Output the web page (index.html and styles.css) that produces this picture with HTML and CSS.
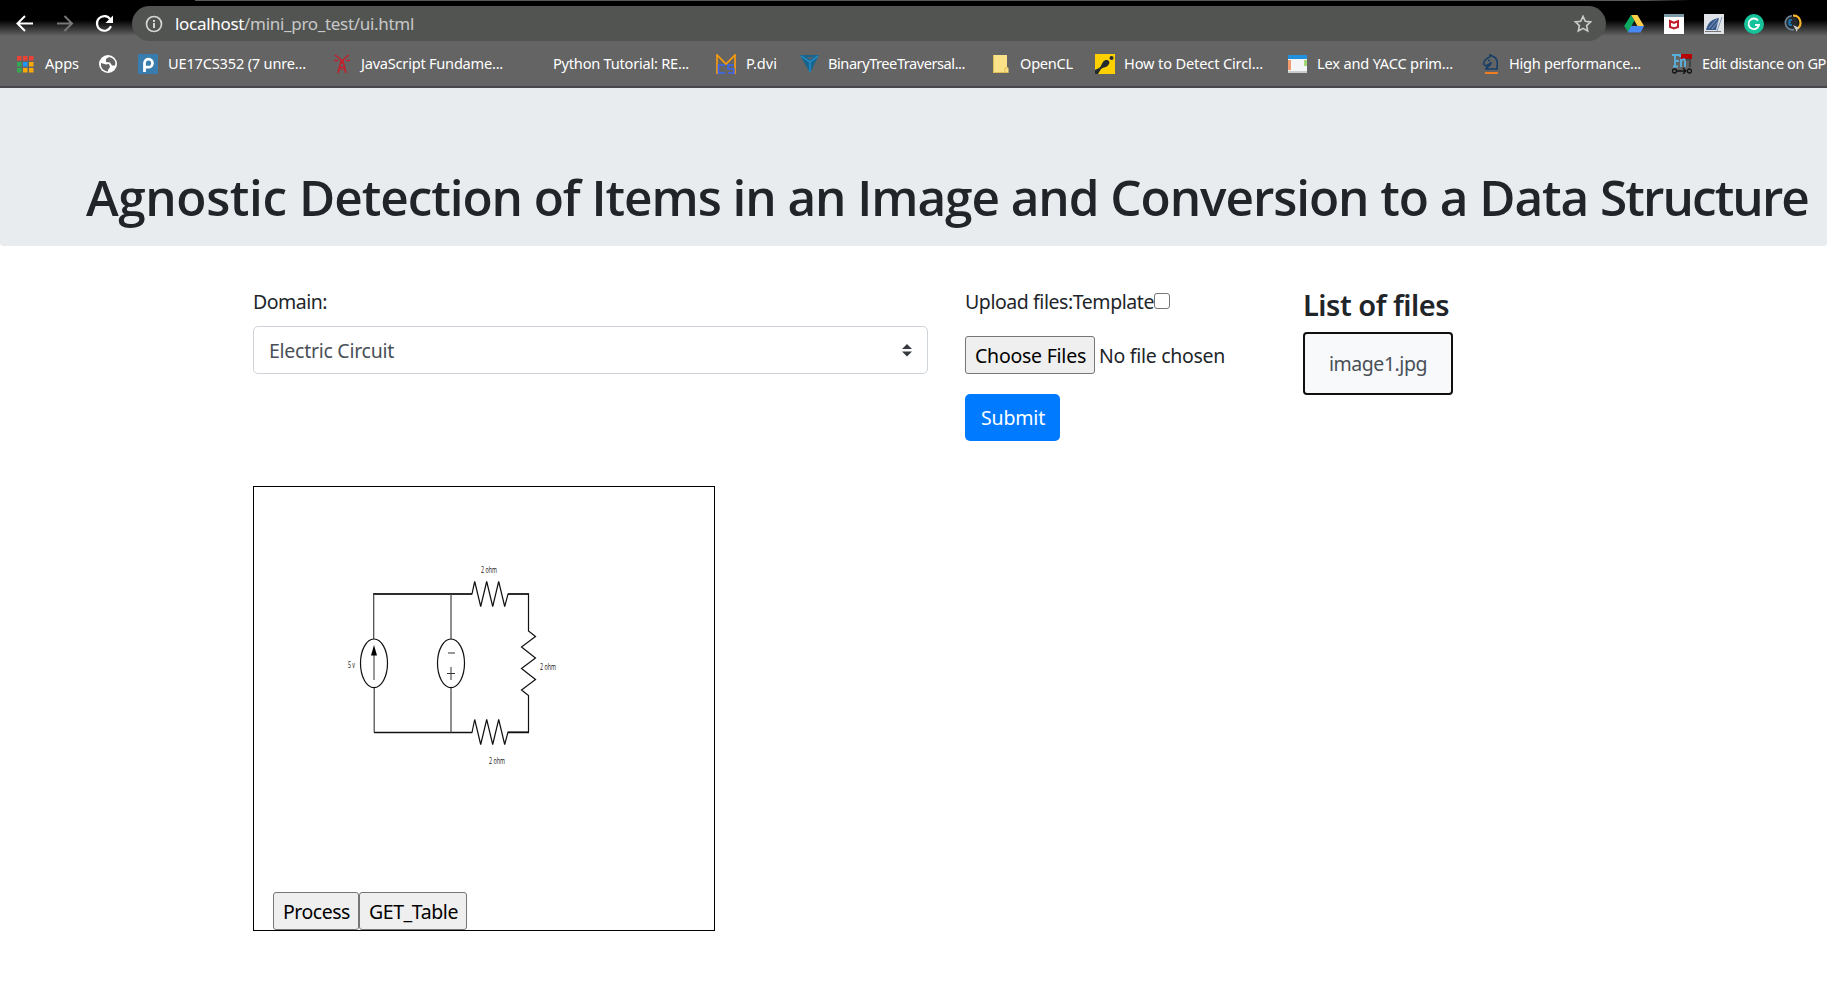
FILE: index.html
```html
<!DOCTYPE html>
<html lang="en">
<head>
<meta charset="utf-8">
<title>ui.html</title>
<link rel="stylesheet" href="styles.css">
</head>
<body>
<header class="browser">
  <div class="toolbar">
    <svg class="nav" width="126" height="35" viewBox="0 0 126 35" fill="none">
      <path d="M33 17.500H18M25 10l-7.500 7.500L25 25" stroke="#fff" stroke-width="2"/>
      <path d="M57 17.500h15M64.500 10l7.500 7.500L64.500 25" stroke="#777" stroke-width="2"/>
      <path d="M110.300 13.300A7.300 7.300 0 1 0 111 20.300" stroke="#fff" stroke-width="2.200"/>
      <path d="M113 9.500v7.500h-7.500z" fill="#fff"/>
    </svg>
    <div class="omnibox">
      <svg width="18" height="18" viewBox="0 0 18 18"><circle cx="9" cy="9" r="7.500" fill="none" stroke="#d5d5d5" stroke-width="1.700"/><path d="M8 8h2v5H8zM8 5h2v2H8z" fill="#d5d5d5"/></svg>
      <div class="url"><span class="host">localhost</span>/mini_pro_test/ui.html</div>
      <svg class="star" width="20" height="20" viewBox="0 0 20 20"><path d="M10 2.300l2.300 5 5.300.6-4 3.700 1.100 5.400L10 14.300 5.300 17l1.100-5.400-4-3.700 5.300-.6z" fill="none" stroke="#ccc" stroke-width="1.600"/></svg>
    </div>
    <div class="extensions">
      <svg width="20" height="20" viewBox="0 0 20 20"><path d="M7 1h6.500L20 12h-6.500z" fill="#ffcf48"/><path d="M7 1l3.300 5.700L4 18 .2 12z" fill="#0da960"/><path d="M7 12h13l-3.500 6.500H3.700z" fill="#4688f4"/></svg>
      <svg width="20" height="20" viewBox="0 0 20 20"><path fill="#fff" d="M0 0h20v20H0z"/><path fill="#7b98a5" d="M0 0h20v3H0z"/><path d="M6 7l4 2 4-2v6l-4 1.500L6 13z" fill="none" stroke="#c11d2b" stroke-width="2"/></svg>
      <svg width="20" height="20" viewBox="0 0 20 20"><path fill="#dfe2e6" d="M0 0h20v20H0z"/><path d="M2 16C4 8 8 5 15 4l-3 12z" fill="#35598c"/><path d="M18 3l-5 14M5 14l8-9M8 15l6-7" stroke="#8499b6"/><path d="M1 17.500h16" stroke="#777"/></svg>
      <svg width="20" height="20" viewBox="0 0 20 20"><circle cx="10" cy="10" r="10" fill="#15c39a"/><path d="M14 6.500A5.300 5.300 0 1 0 15 11h-4" fill="none" stroke="#fff" stroke-width="1.800"/></svg>
      <svg width="20" height="20" viewBox="0 0 20 20"><circle cx="8" cy="8.500" r="6" fill="#25292e"/><path d="M8 1.800A7 7 0 1 0 10 15.600" fill="none" stroke="#70879e" stroke-width="1.600"/><path d="M9 1.700a7 7 0 0 1 4 13" fill="none" stroke="#f5b52e" stroke-width="2.200"/><path d="M5 6v5M5 6h3M5 8.500h2M5 11h3" stroke="#1683c5" stroke-width="1.300"/><path d="M9 11l4 7 .5-3 2-1z" fill="#ccc"/></svg>
    </div>
  </div>
  <nav class="bookmarks">
    <svg class="apps" width="17" height="17" viewBox="0 0 17 17"><path fill="#ea4335" d="M0 0h4.500v4.500H0zM6 0h4.500v4.500H6zM12 0h4.500v4.500H12z"/><path fill="#34a853" d="M0 6h4.500v4.500H0zM0 12h4.500v4.500H0z"/><path fill="#2196f3" d="M6 6h4.500v4.500H6z"/><path fill="#fbaa05" d="M12 6h4.500v4.500H12zM6 12h4.500v4.500H6zM12 12h4.500v4.500H12z"/></svg>
    <span class="bm b-apps">Apps</span>
    <svg class="globe" width="18" height="18" viewBox="0 0 18 18"><circle cx="9" cy="9" r="9" fill="#fff"/><path d="M2 8l5 1.500 3-.5 1 3-2 3v1.500c-5-.5-7.500-4-7-8.500zM10 2L7 4v3l4 .5 2 3h3c1-3 0-6-3-7.500z" fill="#646464"/></svg>
    <svg class="i-p" width="20" height="20" viewBox="0 0 20 20"><path fill="#397dae" d="M0 0h20v20H0z"/><path d="M6.500 18V9a4 4 0 1 1 4 4.200H7" fill="none" stroke="#fff" stroke-width="2.800"/></svg>
    <span class="bm b-ue">UE17CS352 (7 unre...</span>
    <svg class="i-tower" width="16" height="20" viewBox="0 0 16 20" fill="none" stroke="#c3202c" stroke-width="1.500"><path d="M4 19l3-12h2l3 12M5.500 12l5 4M10.500 12l-5 4M6.500 9h3M5 4l3 3 3-3M1 1l4 3M15 1l-4 3M0 6.500h4M12 6.500h4"/></svg>
    <span class="bm b-js">JavaScript Fundame...</span>
    <span class="bm b-py">Python Tutorial: RE...</span>
    <svg class="i-m" width="20" height="20" viewBox="0 0 20 20" fill="none"><path d="M1 20V1l9 9 9-9v19" stroke="#ff9d0a" stroke-width="1.600"/><path d="M9 11H2.500v8H9M18 11h-6v4h6v4h-6" stroke="#3b66f5" stroke-width="1.500"/></svg>
    <span class="bm b-p">P.dvi</span>
    <svg class="i-tri" width="20" height="18" viewBox="0 0 20 18"><path d="M0 0h19l-9 18z" fill="#17648f"/><path d="M1 1l9 6 8-6M10 7v10" fill="none" stroke="#2393cd" stroke-width="1.300"/><path d="M6 2h8l-4 3z" fill="#54606a"/></svg>
    <span class="bm b-bin">BinaryTreeTraversal...</span>
    <svg class="i-folder" width="16" height="18" viewBox="0 0 16 18"><path d="M0 0h14v12l1.500 1v5H0z" fill="#fbe187"/><path d="M.5 0v17.500H15M12 17v-4h3" fill="none" stroke="#dfbd56"/></svg>
    <span class="bm b-open">OpenCL</span>
    <svg class="i-y" width="20" height="20" viewBox="0 0 20 20"><path fill="#ffd000" d="M0 0h20v20H0z"/><circle cx="16.500" cy="4" r="2" fill="#222b2f"/><path d="M0 20v-4l4-2c2-1 2-3 4-6 3-4 8-1 6 2-2 4-6 3-8 5l-3 5z" fill="#222b2f"/></svg>
    <span class="bm b-how">How to Detect Circl...</span>
    <svg class="i-lex" width="19" height="18" viewBox="0 0 19 18"><path fill="#f4f5f6" d="M0 0h19v18H0z"/><path fill="#1f91de" d="M0 0h19v4H0z"/><path fill="#f29a70" d="M0 5h3v10H0z"/><path fill="#a4d77a" d="M16 5h3v6h-3z"/><path fill="#ccc" d="M0 16h19v2H0z"/></svg>
    <span class="bm b-lex">Lex and YACC prim...</span>
    <svg class="i-horse" width="17" height="20" viewBox="0 0 17 20" fill="none"><path d="M3 15h12c0-5 2-11-5-13L8 .8v2C5 4 2 7 1.500 10l2.500 2 5-3c0 3-4 3-5 6M6 6.500h2" stroke="#173e68" stroke-width="1.600"/><path d="M3 19h13" stroke="#ef7e20" stroke-width="2"/></svg>
    <span class="bm b-high">High performance...</span>
    <svg class="i-fm" width="20" height="20" viewBox="0 0 20 20" fill="none"><path d="M9 0h11v5H9z" fill="#b90000"/><path d="M0 1h8v2M3 1v12M1 12.500h5M3 7h4M9 5v8M9 7c3-3 4-2 4 0v6" stroke="#5aaeda" stroke-width="1.900"/><path d="M14 6c4-2 4 0 4 2v5" stroke="#444" stroke-width="2"/><circle cx="2.500" cy="17" r="2" stroke="#111" stroke-width="1.300"/><circle cx="17.500" cy="17" r="2" stroke="#111" stroke-width="1.300"/><path d="M5 17h9M11 14l3 3-3 3" stroke="#111" stroke-width="1.300"/></svg>
    <span class="bm b-edit">Edit distance on GP</span>
  </nav>
</header>
<section class="jumbotron"><h1><span class="h-first">Agnostic </span><span class="h-mid">Detection of Items in an Image and Conversion to a Data </span><span class="h-last">Structure</span></h1></section>
<main class="content">
  <div class="row">
    <div class="domain">
      <div class="label t-domain">Domain:</div>
      <div class="select"><span class="t-select">Electric Circuit</span><svg width="10" height="13" viewBox="0 0 10 13"><path d="M5 0l5 5H0zM0 7.500h10l-5 5z" fill="#343a40"/></svg></div>
    </div>
    <div class="upload">
      <div class="label"><span class="t-upload">Upload files:Template</span><span class="check"></span></div>
      <div class="file"><span class="btn choose"><span class="t-choose">Choose Files</span></span><span class="t-none">No file chosen</span></div>
      <div class="submit"><span class="t-submit">Submit</span></div>
    </div>
    <div class="files">
      <h3><span class="t-list">List of files</span></h3>
      <div class="item"><span class="t-item">image1.jpg</span></div>
    </div>
  </div>
  <div class="canvas">
    <svg class="circuit" width="240" height="230" viewBox="0 0 240 230" fill="none" stroke="#111" stroke-width="1.200">
      <path d="M43.500 44H142l2.700-12.500 6 25 6-25 6 25 6-25 6 25 3.300-12.500h20.500v37l7 5.500-14 10.500 14 11-14 10.500 14 11-14 10.500 7 5.500v36.500h-20.500l-3.300 12.500-6-25-6 25-6-25-6 25-6-25L142 182.500H44"/>
      <path d="M43 44H142M178 44h21M44 182.500h98M178 182.500h21" stroke-width="1.600"/>
      <path d="M43.700 44v45M44.200 137.500v45M121 44v45M121 137.500v45" stroke="#444"/>
      <ellipse cx="44" cy="113.300" rx="13.500" ry="24.300"/><ellipse cx="121" cy="113.300" rx="13.500" ry="24.300"/>
      <path d="M44 130v-27M118 103h7M117 123.500h8M121 117v13" stroke="#333" stroke-width="1"/><path d="M44 95l3 10.500h-6z" fill="#000" stroke="none"/>
      <g class="ohm"><text x="151" y="22.500" textLength="16" lengthAdjust="spacingAndGlyphs">2 ohm</text><text x="210" y="119.500" textLength="16" lengthAdjust="spacingAndGlyphs">2 ohm</text><text x="159" y="213.500" textLength="16" lengthAdjust="spacingAndGlyphs">2 ohm</text><text x="18" y="118" textLength="7" lengthAdjust="spacingAndGlyphs">5 v</text></g>
    </svg>
    <div class="actions"><span class="btn process"><span class="t-process">Process</span></span><span class="btn get"><span class="t-get">GET_Table</span></span></div>
  </div>
</main>
<script src="fit.js"></script>
</body>
</html>
```
FILE: styles.css
```css
*{box-sizing:border-box}
html,body{margin:0;height:983px;overflow:hidden;background:#fff}
body{font:400 19.500px/30px "Noto Sans","Open Sans",sans-serif;color:#212529}
svg{display:block;flex:none}
.browser{height:88px;overflow:hidden;background:linear-gradient(#000 0,#000 20px,#646464 36px);border-bottom:2px solid #46474a}
.toolbar{height:42px;padding-top:6px;display:flex;background:linear-gradient(90deg,transparent 195px,#5a5a5a 195px,#5a5a5a 1644px,transparent 1690px) top/100% 1px no-repeat}
.nav{margin-right:6px}
.omnibox{width:1474px;height:35px;border-radius:18px;background:#525452;display:flex;align-items:center;padding:0 13px}
.url{font-size:17px;line-height:34px;color:#c8c8c8;margin-left:12px;white-space:nowrap}
.host{color:#fff}
.star{margin-left:auto}
.extensions{display:flex;gap:20px;padding:8px 0 0 18px}
.bookmarks{height:44px;display:flex;align-items:center;padding-left:17px;font-size:14.600px;line-height:42px;color:#fff;white-space:nowrap}
.bm{flex:none;display:block;height:44px}
.b-apps{margin-left:11px;width:54px}
.i-p{margin-left:21px}
.b-ue{margin-left:10px;width:166px}
.b-js{margin-left:11px;width:192px}
.b-py{width:163px}
.b-p{margin-left:10px;width:54px}
.b-bin{margin-left:8px;width:165px}
.b-open{margin-left:11px;width:75px}
.b-how{margin-left:9px;width:164px}
.b-lex{margin-left:10px;width:165px}
.b-high{margin-left:10px;width:163px}
.b-edit{margin-left:10px}
.jumbotron{height:158px;padding:80px 0 0 86px;background:#e9ecef;border-radius:0 0 3px 3px;overflow:hidden}
h1{margin:0;font:600 49.500px/59px "Open Sans","Noto Sans",sans-serif;white-space:nowrap}
.content{padding:41px 0 0 253px}
.row{display:flex;height:199px}
.label{height:30px;display:flex}
.label,.file,.select,.submit,.item,.btn,h3{white-space:nowrap}
.domain{width:675px;margin-right:37px}
.select{margin-top:9px;height:48px;border:1px solid #ced4da;border-radius:5px;padding:1px 15px 0;color:#495057;display:flex;align-items:center;justify-content:space-between}
.upload{width:338px}
.check{width:16px;height:16px;border:1px solid #767676;border-radius:3px;margin-top:6px}
.file{margin-top:19px;display:flex;align-items:center;gap:4px}
.t-none{padding-top:1px}
.btn{height:38px;border:1px solid #767676;border-radius:3px;background:#efefef;color:#000;display:flex;align-items:center;padding:1px 0 0 9px}
.choose{width:130px}
.submit{margin-top:20px;width:95px;height:47px;border-radius:5px;background:#007bff;color:#fff;display:flex;align-items:center;padding-left:16px}
h3{margin:0;font-size:29px;line-height:36px;font-weight:600}
.item{margin-top:9px;width:150px;height:63px;border:2px solid #101010;border-radius:4px;background:#f8f9fa;color:#495057;display:flex;align-items:center;padding-left:24px}
.canvas{width:462px;height:445px;border:1px solid #000;display:flex;flex-direction:column;justify-content:space-between;padding:63px 0 0 19px}
.circuit{margin-left:57px}
.ohm text{font:9.500px "Open Sans",sans-serif;fill:#111;stroke:none}
.actions{display:flex}
.process{width:86px}
.get{width:108px}
```
FILE: fit.js
```js
// Keep label widths stable across font stacks by adjusting tracking.
const widths = {
  '.h-first': 213, '.h-mid': 1301, '.h-last': 208,
  '.url': 239, '.b-apps': 34, '.b-ue': 138, '.b-js': 142, '.b-py': 136, '.b-p': 31,
  '.b-bin': 137, '.b-open': 53, '.b-how': 139, '.b-lex': 136, '.b-high': 132, '.b-edit': 124,
  '.t-domain': 74, '.t-select': 125, '.t-upload': 189, '.t-choose': 111, '.t-none': 126,
  '.t-submit': 64, '.t-list': 146, '.t-item': 98, '.t-process': 67, '.t-get': 89
};
for (const [sel, width] of Object.entries(widths)) {
  const el = document.querySelector(sel);
  const range = document.createRange();
  range.selectNodeContents(el);
  const actual = range.getBoundingClientRect().width;
  el.style.letterSpacing = (width - actual) / el.textContent.length + 'px';
}
```
